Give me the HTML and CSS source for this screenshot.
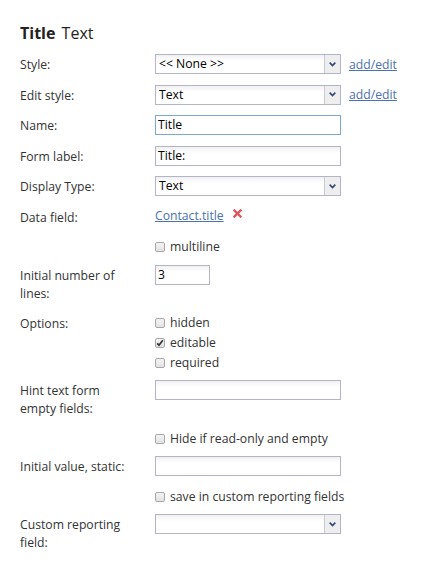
FILE: index.html
```html
<!DOCTYPE html>
<html>
<head>
<meta charset="utf-8">
<link rel="stylesheet" href="styles.css">
</head>
<body>
<div class="panel">
  <h1 class="title"><b>Title</b> Text</h1>

  <div class="row">
    <label class="lbl">Style:</label>
    <div class="ctl">
      <div class="select"><span class="val">&lt;&lt; None &gt;&gt;</span><span class="btn"><svg width="7" height="5" viewBox="0 0 7 5"><path d="M0.7 0.7 L3.5 3.6 L6.3 0.7" fill="none" stroke="#2f4a7a" stroke-width="1.7"/></svg></span></div>
      <a class="link" href="#">add/edit</a>
    </div>
  </div>

  <div class="row">
    <label class="lbl">Edit style:</label>
    <div class="ctl">
      <div class="select"><span class="val">Text</span><span class="btn"><svg width="7" height="5" viewBox="0 0 7 5"><path d="M0.7 0.7 L3.5 3.6 L6.3 0.7" fill="none" stroke="#2f4a7a" stroke-width="1.7"/></svg></span></div>
      <a class="link" href="#">add/edit</a>
    </div>
  </div>

  <div class="row">
    <label class="lbl">Name:</label>
    <div class="ctl"><div class="input focus">Title</div></div>
  </div>

  <div class="row">
    <label class="lbl">Form label:</label>
    <div class="ctl"><div class="input">Title:</div></div>
  </div>

  <div class="row">
    <label class="lbl">Display Type:</label>
    <div class="ctl">
      <div class="select"><span class="val">Text</span><span class="btn"><svg width="7" height="5" viewBox="0 0 7 5"><path d="M0.7 0.7 L3.5 3.6 L6.3 0.7" fill="none" stroke="#2f4a7a" stroke-width="1.7"/></svg></span></div>
    </div>
  </div>

  <div class="row text-row">
    <label class="lbl">Data field:</label>
    <div class="ctl textline">
      <a class="link" href="#">Contact.title</a>
      <svg class="remove" width="9" height="9" viewBox="0 0 9 9"><path d="M1.5 1.5 L7.5 7.5 M7.5 1.5 L1.5 7.5" stroke="#d9585a" stroke-width="2.4" stroke-linecap="square"/></svg>
    </div>
  </div>

  <div class="row check-row">
    <span class="lbl"></span>
    <div class="ctl">
      <div class="check"><span class="box"></span>multiline</div>
    </div>
  </div>

  <div class="row">
    <label class="lbl">Initial number of lines:</label>
    <div class="ctl"><div class="input short">3</div></div>
  </div>

  <div class="row options-row">
    <label class="lbl">Options:</label>
    <div class="ctl checks">
      <div class="check"><span class="box"></span>hidden</div>
      <div class="check"><span class="box"><svg width="8" height="8" viewBox="0 0 8 8"><path d="M1.2 4.3 L3 6.2 L6.8 1.2" fill="none" stroke="#333" stroke-width="1.7"/></svg></span>editable</div>
      <div class="check"><span class="box"></span>required</div>
    </div>
  </div>

  <div class="row hint-row">
    <label class="lbl">Hint text form empty fields:</label>
    <div class="ctl"><div class="input"></div></div>
  </div>

  <div class="row check-row">
    <span class="lbl"></span>
    <div class="ctl">
      <div class="check"><span class="box"></span>Hide if read-only and empty</div>
    </div>
  </div>

  <div class="row">
    <label class="lbl">Initial value, static:</label>
    <div class="ctl"><div class="input"></div></div>
  </div>

  <div class="row check-row">
    <span class="lbl"></span>
    <div class="ctl">
      <div class="check"><span class="box"></span>save in custom reporting fields</div>
    </div>
  </div>

  <div class="row">
    <label class="lbl">Custom reporting field:</label>
    <div class="ctl">
      <div class="select"><span class="val"></span><span class="btn"><svg width="7" height="5" viewBox="0 0 7 5"><path d="M0.7 0.7 L3.5 3.6 L6.3 0.7" fill="none" stroke="#2f4a7a" stroke-width="1.7"/></svg></span></div>
    </div>
  </div>
</div>
</body>
</html>
```

FILE: styles.css
```css
html, body {
  margin: 0;
  padding: 0;
  background: #ffffff;
}

body {
  font-family: "Open Sans", "Noto Sans", Arial, sans-serif;
  font-size: 12.2px;
  color: #333333;
}

.panel {
  padding: 21px 0 0 20px;
}

.title {
  margin: 0 0 4px 0;
  font-size: 16px;
  font-weight: normal;
  line-height: 24px;
  color: #222222;
}

.title b {
  font-weight: bold;
  margin-right: 2px;
}

.row {
  display: grid;
  grid-template-columns: 118px auto;
  column-gap: 17px;
  align-items: start;
  padding: 5px 0 5.5px 0;
}

.lbl {
  display: block;
  line-height: 18px;
  padding-top: 2px;
}

.ctl {
  display: flex;
  align-items: center;
  gap: 8px;
}

.select {
  box-sizing: border-box;
  width: 186px;
  height: 20px;
  border: 1px solid #b3b5c7;
  display: flex;
  align-items: stretch;
  background: linear-gradient(#f1f1f1, #ffffff 6px);
}

.select .val {
  flex: 1;
  padding-left: 3px;
  line-height: 18px;
  color: #000000;
}

.btn {
  width: 15px;
  border-left: 1px solid #c9cad3;
  background: #eeeeee;
  display: flex;
  align-items: center;
  justify-content: center;
}

.input {
  box-sizing: border-box;
  width: 186px;
  height: 20px;
  border: 1px solid #b3b5c7;
  padding-left: 2px;
  line-height: 18px;
  color: #000000;
  background: linear-gradient(#f1f1f1, #ffffff 6px);
}

.input.focus {
  border-color: #7ba7d8;
  background: #ffffff;
}

.input.short {
  width: 55px;
}

.link {
  color: #4a72ae;
  text-decoration: underline;
}

.textline {
  line-height: 18px;
  padding-top: 0;
  gap: 9px;
}

.remove {
  margin-top: -5px;
}

.check-row {
  padding-bottom: 2.5px;
}

.check-row .ctl,
.checks {
  flex-direction: column;
  align-items: flex-start;
  gap: 0;
}

.check {
  display: flex;
  align-items: center;
  height: 20px;
  line-height: 20px;
}

.box {
  box-sizing: border-box;
  width: 10px;
  height: 10px;
  border: 1px solid #a8a8a8;
  border-radius: 2px;
  background: linear-gradient(#f4f4f4, #e2e2e2);
  margin-right: 5px;
  display: flex;
  align-items: center;
  justify-content: center;
}

.box svg {
  display: block;
}

.options-row {
  padding-bottom: 2px;
}
```
